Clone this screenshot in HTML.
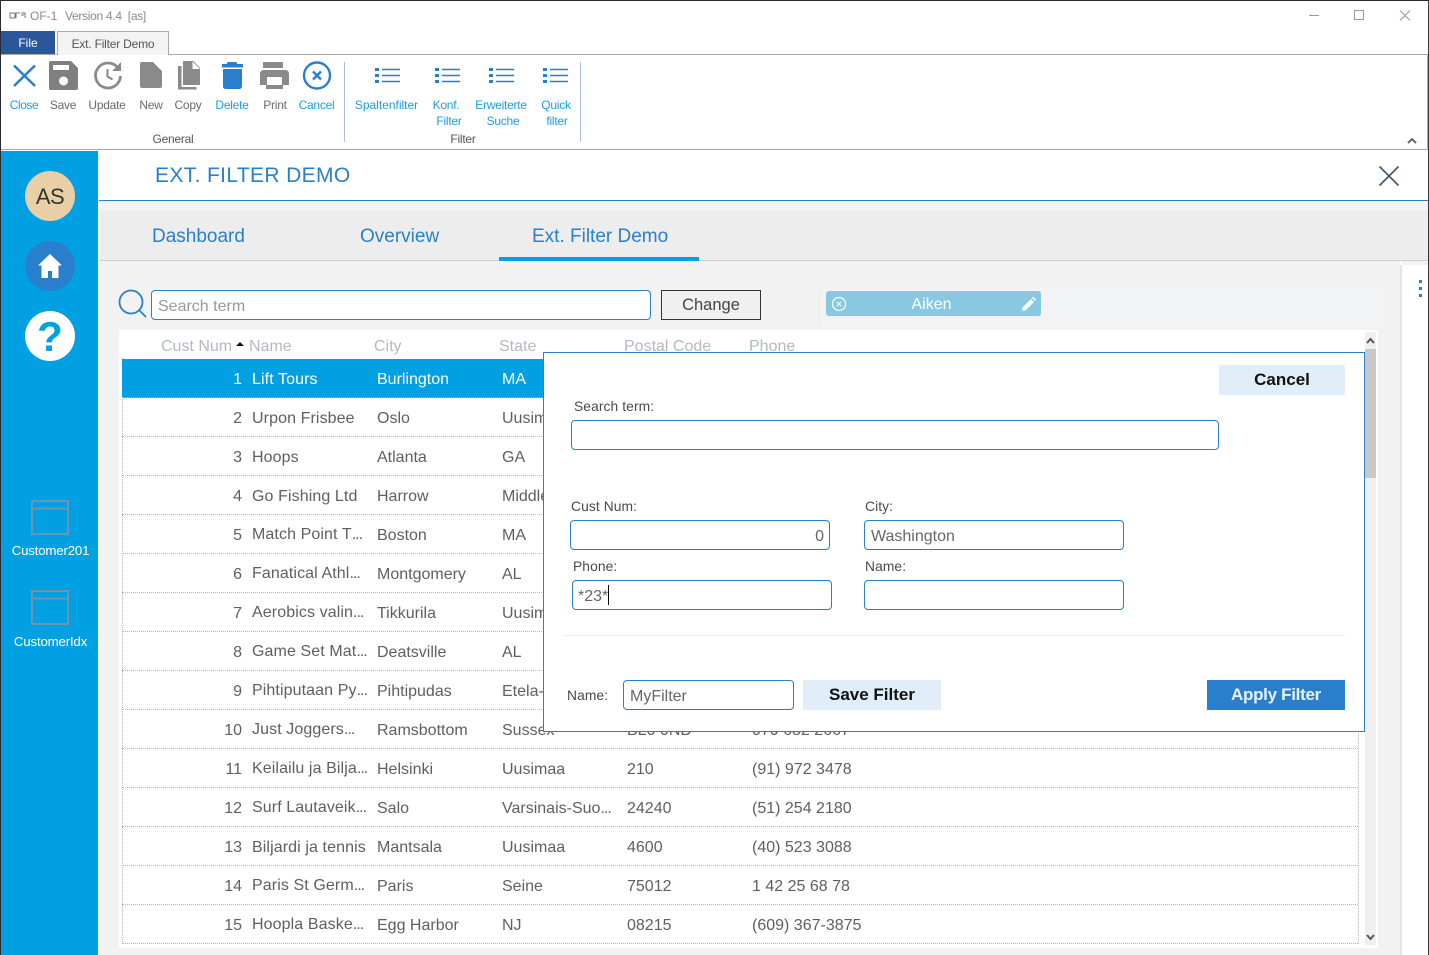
<!DOCTYPE html>
<html><head><meta charset="utf-8"><title>OF-1</title>
<style>
html,body{margin:0;padding:0}
body{width:1429px;height:955px;position:relative;overflow:hidden;background:#fff;font-family:"Liberation Sans",sans-serif}
.a{position:absolute}
.x{position:absolute;white-space:nowrap}
.rb{position:absolute;font-size:12px;line-height:16px;text-align:center;white-space:nowrap;letter-spacing:-.25px;transform:translateX(-50%)}
.bl{color:#1b9ce2}.gr{color:#6a6a6a}
.r{position:absolute;left:122px;width:1236px;height:38px;border-bottom:1px dotted #b5b5b5;color:#5f5f5f;font-size:16px;line-height:20px}
.r span{position:absolute;top:11px;white-space:nowrap}
.r i{font-style:normal;letter-spacing:-1px}
.r .n{left:0;width:120px;text-align:right}
.r .m{left:130px;letter-spacing:.1px}.r .c{left:255px}.r .s{left:380px;width:114px;overflow:hidden}.r .z{left:505px}.r .p{left:630px}
.r .e{top:10px}
.h{position:absolute;top:337px;font-size:16px;line-height:20px;color:#b4b8c2;white-space:nowrap}
.in{position:absolute;box-sizing:border-box;height:30px;border:1px solid #2a7fcc;border-radius:4px;background:#fff;color:#666;font-size:16px;line-height:32px;padding:0 6px;white-space:nowrap}
.lb{position:absolute;font-size:13.8px;line-height:16px;color:#4a4a4a;white-space:nowrap;letter-spacing:.1px}
.bt{position:absolute;height:30px;line-height:29px;text-align:center;font-weight:bold;font-size:17px;background:#e1eefa;color:#111}
.tab{position:absolute;top:226px;font-size:19px;line-height:22px;color:#2a7fcc;white-space:nowrap}
</style></head><body>

<!-- window frame -->
<div class="a" style="left:0;top:0;width:1429px;height:1px;background:#2a2a36"></div>
<div class="a" style="left:0;top:0;width:1px;height:955px;background:#2a2a36"></div>
<div class="a" style="left:1428px;top:0;width:1px;height:955px;background:#3a3550"></div>

<!-- title bar -->
<svg class="a" style="left:9px;top:10px" width="17" height="12" viewBox="0 0 17 12"><path d="M1 3h5v5H1zM7 3h4M7 3v5M12 3h4v5M12 5h3" fill="none" stroke="#777" stroke-width="1"/></svg>
<div class="x" style="left:30px;top:9px;font-size:12px;line-height:14px;color:#8a8a8a;">OF-1</div>
<div class="x" style="left:65px;top:9px;font-size:12px;line-height:14px;color:#8a8a8a;letter-spacing:-.3px">Version 4.4&nbsp; [as]</div>
<svg class="a" style="left:1305px;top:8px" width="115" height="16" viewBox="0 0 115 16"><path d="M4 7.5h10" stroke="#999" fill="none"/><rect x="49.5" y="2.5" width="9" height="9" fill="none" stroke="#999"/><path d="M95 2.5l10 10M105 2.5l-10 10" stroke="#999" fill="none"/></svg>

<!-- ribbon tabs -->
<div class="a" style="left:1px;top:54px;width:1427px;height:1px;background:#aaa"></div>
<div class="a" style="left:1px;top:31px;width:54px;height:23px;background:#2b579a;color:#fff;font-size:12px;line-height:24px;text-align:center">File</div>
<div class="a" style="left:57px;top:31px;width:112px;height:24px;box-sizing:border-box;background:#f3f3f3;border:1px solid #aaa;border-bottom:0;color:#555;font-size:12px;line-height:25px;text-align:center;letter-spacing:-.2px">Ext. Filter Demo</div>
<div class="a" style="left:1px;top:149px;width:1427px;height:1px;background:#aaa"></div>
<div class="a" style="left:1427px;top:54px;width:1px;height:96px;background:#aaa"></div>
<div class="a" style="left:344px;top:62px;width:1px;height:80px;background:#a9bdd6"></div>
<div class="a" style="left:580px;top:62px;width:1px;height:80px;background:#a9bdd6"></div>

<!-- ribbon icons -->
<svg class="a" style="left:0;top:56px" width="345" height="40" viewBox="0 0 345 40">
<path d="M14 9.500L35 30M35 9.500L14 30" stroke="#2a7fcc" stroke-width="2.600" fill="none"/>
<path d="M51 5h20l7 7v20a2 2 0 0 1-2 2H51a2 2 0 0 1-2-2V7a2 2 0 0 1 2-2z" fill="#7f7f7f"/><rect x="53" y="9" width="16" height="5" fill="#fff"/><circle cx="63.500" cy="25" r="4.500" fill="#fff"/>
<path d="M118 12a12.500 12.500 0 1 0 2.500 8" fill="none" stroke="#8a8a8a" stroke-width="2.800"/><path d="M121 6v9h-9z" fill="#8a8a8a"/><path d="M107.500 13v7.500l5 3" fill="none" stroke="#8a8a8a" stroke-width="2"/>
<path d="M142 6h11l9 9v15a2 2 0 0 1-2 2h-18a2 2 0 0 1-2-2V8a2 2 0 0 1 2-2z" fill="#8a8a8a"/><path d="M153 6h9v9z" fill="#fff"/>
<path d="M178 10h3.500v21h15v2.500h-18.500z" fill="#8a8a8a"/><path d="M183 5h10.500l6.500 7v17h-17z" fill="#8a8a8a"/><path d="M193 6v6.500h6.500" fill="#fff" stroke="#fff" stroke-width="1"/>
<path d="M227 7.500a1.500 1.500 0 0 1 1.500-1.500h7a1.500 1.500 0 0 1 1.500 1.500V8h6v3.500h-21V8h5z" fill="#2a7fcc"/><path d="M223 13h19v17.500a2.500 2.500 0 0 1-2.500 2.500h-14a2.500 2.500 0 0 1-2.500-2.500z" fill="#2a7fcc"/>
<path d="M263 6h20v6h-20z" fill="#8a8a8a"/><path d="M263.500 14h22a3.500 3.500 0 0 1 3.500 3.500V29h-6v4h-17v-4h-6V17.500a3.500 3.500 0 0 1 3.500-3.500z" fill="#8a8a8a"/><rect x="267" y="21" width="15" height="8" fill="#fff"/>
<circle cx="317" cy="19.500" r="13" fill="none" stroke="#2a7fcc" stroke-width="2.400"/><path d="M313 15.500l8 8M321 15.500l-8 8" stroke="#2a7fcc" stroke-width="2.400" fill="none"/>
</svg>
<svg class="a" style="left:370px;top:64px" width="200" height="22" viewBox="0 0 200 22">
<g fill="#2a7fcc"><rect x="5" y="4" width="4" height="3"/><rect x="5" y="10" width="4" height="3"/><rect x="5" y="16" width="4" height="3"/><rect x="65" y="4" width="4" height="3"/><rect x="65" y="10" width="4" height="3"/><rect x="65" y="16" width="4" height="3"/><rect x="119" y="4" width="4" height="3"/><rect x="119" y="10" width="4" height="3"/><rect x="119" y="16" width="4" height="3"/><rect x="173" y="4" width="4" height="3"/><rect x="173" y="10" width="4" height="3"/><rect x="173" y="16" width="4" height="3"/></g>
<path d="M12 5.500h18M12 11.500h18M12 17.500h18M72 5.500h18M72 11.500h18M72 17.500h18M126 5.500h18M126 11.500h18M126 17.500h18M180 5.500h18M180 11.500h18M180 17.500h18" stroke="#2a7fcc" stroke-width="1.500" fill="none"/>
</svg>

<!-- ribbon labels -->
<div class="rb bl" style="left:24px;top:97px;letter-spacing:-.45px">Close</div>
<div class="rb gr" style="left:63px;top:97px">Save</div>
<div class="rb gr" style="left:107px;top:97px">Update</div>
<div class="rb gr" style="left:151px;top:97px">New</div>
<div class="rb gr" style="left:188px;top:97px">Copy</div>
<div class="rb bl" style="left:232px;top:97px">Delete</div>
<div class="rb gr" style="left:275px;top:97px">Print</div>
<div class="rb bl" style="left:316.500px;top:97px">Cancel</div>
<div class="rb gr" style="left:173px;top:131px;color:#555">General</div>
<div class="rb bl" style="left:386.500px;top:97px;letter-spacing:0">Spaltenfilter</div>
<div class="rb bl" style="left:446px;top:97px">Konf.</div>
<div class="rb bl" style="left:449px;top:113px">Filter</div>
<div class="rb bl" style="left:501px;top:97px">Erweiterte</div>
<div class="rb bl" style="left:503px;top:113px">Suche</div>
<div class="rb bl" style="left:556px;top:97px">Quick</div>
<div class="rb bl" style="left:557px;top:113px">filter</div>
<div class="rb gr" style="left:463px;top:131px;color:#555">Filter</div>
<svg class="a" style="left:1406px;top:136px" width="12" height="9" viewBox="0 0 12 9"><path d="M2 7l4-4 4 4" fill="none" stroke="#666" stroke-width="2"/></svg>

<!-- sidebar -->
<div class="a" style="left:1px;top:151px;width:97px;height:804px;background:#00a0e3"></div>
<div class="a" style="left:25px;top:171px;width:50px;height:50px;border-radius:50%;background:#e8cfa6;color:#333;font-size:22px;line-height:52px;text-align:center;letter-spacing:-.5px">AS</div>
<div class="a" style="left:25px;top:241px;width:50px;height:50px;border-radius:50%;background:#2a7fcc"></div>
<svg class="a" style="left:37px;top:253px" width="26" height="26" viewBox="0 0 26 26"><path d="M13 1L1 12.500h3.500V25h6.500v-7h4v7h6.500V12.500H25z" fill="#fff"/></svg>
<div class="a" style="left:25px;top:311px;width:50px;height:50px;border-radius:50%;background:#fff;color:#00a0e3;font-size:42px;font-weight:bold;line-height:52px;text-align:center">?</div>
<svg class="a" style="left:30px;top:499px" width="40" height="128" viewBox="0 0 40 128"><g fill="none" stroke="#6f94ad" stroke-width="2"><rect x="2" y="2" width="36" height="33"/><path d="M2 9.500h36"/><rect x="2" y="92" width="36" height="33"/><path d="M2 99.500h36"/></g></svg>
<div class="x" style="left:1px;width:99px;text-align:center;top:543px;font-size:13.3px;line-height:16px;color:#fff;letter-spacing:-.2px">Customer201</div>
<div class="x" style="left:1px;width:99px;text-align:center;top:634px;font-size:13.3px;line-height:16px;color:#fff;letter-spacing:-.2px">CustomerIdx</div>

<!-- header -->
<div class="x" style="left:155px;top:164px;font-size:21px;line-height:24px;color:#2a7fcc;letter-spacing:.36px">EXT. FILTER DEMO</div>
<svg class="a" style="left:1378px;top:165px" width="22" height="22" viewBox="0 0 22 22"><path d="M1.500 1.500l19 19M20.500 1.500l-19 19" stroke="#4a5a72" stroke-width="1.800" fill="none"/></svg>
<div class="a" style="left:99px;top:200px;width:1329px;height:1px;background:#2a7fcc"></div>

<!-- content background -->
<div class="a" style="left:99px;top:201px;width:1301px;height:754px;background:#f2f2f2"></div>
<div class="a" style="left:99px;top:201px;width:1329px;height:10px;background:#f2f3f5"></div>
<div class="a" style="left:1400px;top:265px;width:2px;height:690px;background:#e6e6e6"></div>
<div class="a" style="left:99px;top:211px;width:1329px;height:49px;background:#ededed"></div>
<div class="a" style="left:99px;top:260px;width:1329px;height:1px;background:#d0d0d0"></div>
<div class="a" style="left:1402px;top:261px;width:26px;height:4px;background:#f2f2f2"></div>
<div class="tab" style="left:152px">Dashboard</div>
<div class="tab" style="left:360px">Overview</div>
<div class="tab" style="left:532px">Ext. Filter Demo</div>
<div class="a" style="left:499px;top:257px;width:200px;height:4px;background:#00a0e3"></div>
<div class="a" style="left:1419px;top:280px;width:3px;height:3px;background:#2a7fcc;box-shadow:0 7px 0 #2a7fcc,0 14px 0 #2a7fcc"></div>

<!-- search row -->
<svg class="a" style="left:118px;top:289px" width="30" height="30" viewBox="0 0 30 30"><circle cx="13" cy="13" r="11.500" fill="none" stroke="#2a7fcc" stroke-width="1.800"/><path d="M21.500 21.500l6.500 6.500" stroke="#2a7fcc" stroke-width="1.800"/></svg>
<div class="in" style="left:151px;top:290px;width:500px;color:#999;font-size:16px">Search term</div>
<div class="a" style="left:661px;top:290px;width:100px;height:30px;box-sizing:border-box;border:1px solid #333;background:#f0f0f0;color:#444;font-size:16.5px;line-height:28px;text-align:center">Change</div>
<div class="a" style="left:819px;top:290px;width:561px;height:35px;background:#f2f3f5;border-left:1px solid #e8e8e8"></div>
<div class="a" style="left:826px;top:291px;width:211px;padding-right:4px;height:25px;border-radius:3px;background:#89c8e1;color:#fff;font-size:16px;line-height:28px;text-align:center">Aiken</div>
<svg class="a" style="left:830px;top:295px" width="18" height="18" viewBox="0 0 18 18"><circle cx="9" cy="9" r="6.500" fill="none" stroke="#fff" stroke-width="1.200"/><path d="M7 7l4 4M11 7l-4 4" stroke="#fff" stroke-width="1.200"/></svg>
<svg class="a" style="left:1020px;top:296px" width="18" height="16" viewBox="0 0 18 16"><path d="M2 15l.8-3.800L11 3l3 3-8.200 8.200zM12 2l1.200-1.200 3 3L15 5z" fill="#fff"/></svg>

<!-- table -->
<div class="a" style="left:119px;top:330px;width:1259px;height:618px;background:#fff"></div>
<div class="a" style="left:122px;top:358px;width:1px;height:586px;border-left:1px dotted #b5b5b5"></div>
<div class="a" style="left:1358px;top:358px;width:1px;height:586px;border-left:1px dotted #b5b5b5"></div>
<div class="h" style="left:161px">Cust Num</div>
<div class="a" style="left:236px;top:342px;width:0;height:0;border-left:4px solid transparent;border-right:4px solid transparent;border-bottom:4px solid #111"></div>
<div class="h" style="left:249px">Name</div>
<div class="h" style="left:374px">City</div>
<div class="h" style="left:499px">State</div>
<div class="h" style="left:624px">Postal Code</div>
<div class="h" style="left:749px">Phone</div>

<div class="r" style="top:359px;background:#00a0e3;color:#fff"><span class="n">1</span><span class="m">Lift Tours</span><span class="c">Burlington</span><span class="s">MA</span><span class="z">02114</span><span class="p">(617) 450-0086</span></div>
<div class="r" style="top:398px"><span class="n">2</span><span class="m">Urpon Frisbee</span><span class="c">Oslo</span><span class="s">Uusimaa</span><span class="z">45321</span><span class="p">(98) 345 4355</span></div>
<div class="r" style="top:437px"><span class="n">3</span><span class="m">Hoops</span><span class="c">Atlanta</span><span class="s">GA</span><span class="z">02112</span><span class="p">(617) 355-1557</span></div>
<div class="r" style="top:476px"><span class="n">4</span><span class="m">Go Fishing Ltd</span><span class="c">Harrow</span><span class="s">Middlesex</span><span class="z">HA8 7DL</span><span class="p">0181 672 3456</span></div>
<div class="r" style="top:515px"><span class="n">5</span><span class="m e">Match Point T<i>...</i></span><span class="c">Boston</span><span class="s">MA</span><span class="z">02110</span><span class="p">(817) 498-2595</span></div>
<div class="r" style="top:554px"><span class="n">6</span><span class="m e">Fanatical Athl<i>...</i></span><span class="c">Montgomery</span><span class="s">AL</span><span class="z">36104</span><span class="p">(205) 555-1212</span></div>
<div class="r" style="top:593px"><span class="n">7</span><span class="m e">Aerobics valin<i>...</i></span><span class="c">Tikkurila</span><span class="s">Uusimaa</span><span class="z">01300</span><span class="p">(90) 876 1234</span></div>
<div class="r" style="top:632px"><span class="n">8</span><span class="m e">Game Set Mat<i>...</i></span><span class="c">Deatsville</span><span class="s">AL</span><span class="z">36022</span><span class="p">(205) 555-9898</span></div>
<div class="r" style="top:671px"><span class="n">9</span><span class="m e">Pihtiputaan Py<i>...</i></span><span class="c">Pihtipudas</span><span class="s">Etela-Suomi</span><span class="z">44800</span><span class="p">(60) 345 6789</span></div>
<div class="r" style="top:710px"><span class="n">10</span><span class="m e">Just Joggers<i>...</i></span><span class="c">Ramsbottom</span><span class="s">Sussex</span><span class="z">BL0 0ND</span><span class="p">070 682 2667</span></div>
<div class="r" style="top:749px"><span class="n">11</span><span class="m e">Keilailu ja Bilja<i>...</i></span><span class="c">Helsinki</span><span class="s">Uusimaa</span><span class="z">210</span><span class="p">(91) 972 3478</span></div>
<div class="r" style="top:788px"><span class="n">12</span><span class="m e">Surf Lautaveik<i>...</i></span><span class="c">Salo</span><span class="s">Varsinais-Suo<i>...</i></span><span class="z">24240</span><span class="p">(51) 254 2180</span></div>
<div class="r" style="top:827px"><span class="n">13</span><span class="m">Biljardi ja tennis</span><span class="c">Mantsala</span><span class="s">Uusimaa</span><span class="z">4600</span><span class="p">(40) 523 3088</span></div>
<div class="r" style="top:866px"><span class="n">14</span><span class="m e">Paris St Germ<i>...</i></span><span class="c">Paris</span><span class="s">Seine</span><span class="z">75012</span><span class="p">1 42 25 68 78</span></div>
<div class="r" style="top:905px"><span class="n">15</span><span class="m e">Hoopla Baske<i>...</i></span><span class="c">Egg Harbor</span><span class="s">NJ</span><span class="z">08215</span><span class="p">(609) 367-3875</span></div>

<!-- scrollbar -->
<div class="a" style="left:1365px;top:332px;width:11px;height:613px;background:#efefef"></div>
<div class="a" style="left:1365px;top:349px;width:11px;height:129px;background:#c8c8c8"></div>
<svg class="a" style="left:1365px;top:336px" width="11" height="9" viewBox="0 0 11 9"><path d="M2 7l3.500-4L9 7" fill="none" stroke="#555" stroke-width="2"/></svg>
<svg class="a" style="left:1365px;top:933px" width="11" height="9" viewBox="0 0 11 9"><path d="M2 2l3.500 4L9 2" fill="none" stroke="#555" stroke-width="2"/></svg>

<!-- modal -->
<div class="a" style="left:543px;top:352px;width:822px;height:380px;box-sizing:border-box;border:1px solid #2a7fcc;background:#fff"></div>
<div class="bt" style="left:1219px;top:365px;width:126px">Cancel</div>
<div class="lb" style="left:574px;top:399px">Search term:</div>
<div class="in" style="left:571px;top:420px;width:648px"></div>
<div class="lb" style="left:571px;top:499px">Cust Num:</div>
<div class="in" style="left:570px;top:520px;width:260px;text-align:right;padding-right:5px">0</div>
<div class="lb" style="left:865px;top:499px">City:</div>
<div class="in" style="left:864px;top:520px;width:260px">Washington</div>
<div class="lb" style="left:573px;top:559px">Phone:</div>
<div class="in" style="left:572px;top:580px;width:260px;padding-left:5px">*23*</div>
<div class="a" style="left:608px;top:585px;width:1px;height:20px;background:#000"></div>
<div class="lb" style="left:865px;top:559px">Name:</div>
<div class="in" style="left:864px;top:580px;width:260px"></div>
<div class="a" style="left:564px;top:635px;width:781px;height:1px;background:#ececec"></div>
<div class="lb" style="left:567px;top:688px">Name:</div>
<div class="in" style="left:623px;top:680px;width:171px">MyFilter</div>
<div class="bt" style="left:803px;top:680px;width:138px">Save Filter</div>
<div class="bt" style="left:1207px;top:680px;width:138px;background:#2a7fcc;color:#e6f3fd;letter-spacing:-.3px">Apply Filter</div>

</body></html>
